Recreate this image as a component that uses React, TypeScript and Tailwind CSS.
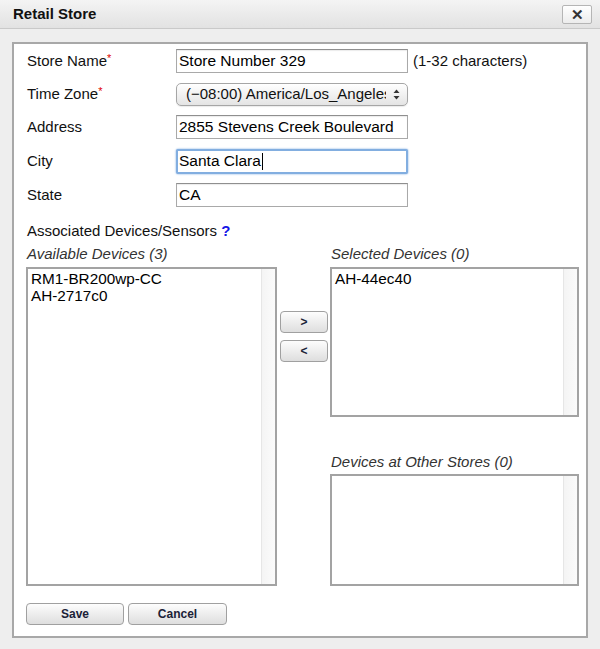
import React from "react";

const font = { fontFamily: '"Liberation Sans", Arial, Helvetica, sans-serif' };

function Label({ text, required }: { text: string; required?: boolean }) {
  return (
    <div className="w-[150px] shrink-0 pl-px pt-px text-[15px] text-[#111]">
      {text}
      {required && <span className="relative -top-[4px] text-[11px] text-[#e00000]">*</span>}
    </div>
  );
}

function TextInput({ value, focused }: { value: string; focused?: boolean }) {
  return (
    <div
      className={
        focused
          ? "flex h-[25px] w-[232px] items-center rounded-[2px] border-2 border-[#82aee0] bg-white pl-[1px] text-[15.5px] text-black shadow-[0_0_2px_#6b9fdc]"
          : "flex h-[24px] w-[232px] items-center border border-[#a9a9a9] border-t-[#8f8f8f] bg-white pl-[2px] text-[15.5px] text-black shadow-[inset_0_1px_1px_rgba(0,0,0,0.08)]"
      }
    >
      {value}
      {focused && <span className="ml-px inline-block h-[17px] w-px bg-black" />}
    </div>
  );
}

function ListBox({ items, height }: { items: string[]; height: string }) {
  return (
    <div className={`flex border-2 border-[#a3a3a3] bg-white ${height}`}>
      <div className="flex-1 pl-[3px] pt-px text-[15.3px] leading-[17px] text-black">
        {items.map((it) => (
          <div key={it}>{it}</div>
        ))}
      </div>
      <div className="w-[14px] border-l border-[#e6e6e6] bg-gradient-to-r from-[#f4f4f4] to-[#fbfbfb]" />
    </div>
  );
}

function SmallButton({ label, width }: { label: string; width: string }) {
  return (
    <button
      className={`flex h-[22px] ${width} items-center justify-center rounded-[4px] border border-[#a0a0a0] bg-gradient-to-b from-[#fdfdfd] to-[#dedede] text-[12px] font-bold text-[#1b2238] shadow-[0_1px_0_#fff]`}
    >
      {label}
    </button>
  );
}

export default function App() {
  return (
    <div className="flex h-[649px] w-[600px] flex-col bg-[#eeeeee]" style={font}>
      <div className="flex h-[29px] shrink-0 items-center justify-between border-b border-[#c9c9c9] bg-gradient-to-b from-[#f4f4f4] to-[#e2e2e2] pl-[13px] pr-[8px]">
        <span className="text-[15px] font-bold text-[#111]">Retail Store</span>
        <button className="flex h-[19px] w-[30px] items-center justify-center rounded-[2px] border border-[#b5b5b5] bg-gradient-to-b from-white to-[#ececec] text-[15px] font-bold leading-none text-[#333]">
          ✕
        </button>
      </div>

      <div className="flex flex-1 px-[12px] pb-[11px] pt-[13px]">
        <div className="flex flex-1 flex-col border-2 border-[#a8a8a8] bg-white pl-[12px] pr-[7px] pt-[5px]">
          <div className="flex h-[24px] items-center">
            <Label text="Store Name" required />
            <TextInput value="Store Number 329" />
            <span className="ml-[5px] text-[15px] text-[#111]">(1-32 characters)</span>
          </div>

          <div className="mt-[9px] flex h-[24px] items-center">
            <Label text="Time Zone" required />
            <div className="flex h-[23px] w-[232px] items-center rounded-[5px] border border-[#a6a6a6] bg-gradient-to-b from-white to-[#e4e4e4] pl-[9px] pr-[7px] text-[15px] text-[#111] shadow-[0_1px_1px_rgba(0,0,0,0.08)]">
              <span className="w-[200px] shrink-0 overflow-hidden whitespace-nowrap">(−08:00) America/Los_Angeles</span>
              <svg className="ml-auto shrink-0" width="7" height="11" viewBox="0 0 7 11">
                <path d="M3.5 0.5 L6.5 4 L0.5 4 Z" fill="#333" />
                <path d="M3.5 10.5 L6.5 7 L0.5 7 Z" fill="#333" />
              </svg>
            </div>
          </div>

          <div className="mt-[9px] flex h-[24px] items-center">
            <Label text="Address" />
            <TextInput value="2855 Stevens Creek Boulevard" />
          </div>

          <div className="mt-[10px] flex h-[24px] items-center">
            <Label text="City" />
            <TextInput value="Santa Clara" focused />
          </div>

          <div className="mt-[10px] flex h-[24px] items-center">
            <Label text="State" />
            <TextInput value="CA" />
          </div>

          <div className="mt-[14px] h-[20px] pl-px text-[15px] leading-[20px] text-[#111]">
            Associated Devices/Sensors{" "}
            <span className="font-bold text-[#1515e6]">?</span>
          </div>

          <div className="mt-[3px] flex">
            <div className="flex w-[251px] flex-col">
              <div className="h-[20px] pl-px text-[15px] italic leading-[20px] text-[#333]">Available Devices (3)</div>
              <div className="mt-[3px]">
                <ListBox items={["RM1-BR200wp-CC", "AH-2717c0"]} height="h-[319px]" />
              </div>
            </div>

            <div className="flex w-[53px] flex-col items-center pl-px">
              <div className="mt-[67px]">
                <SmallButton label=">" width="w-[48px]" />
              </div>
              <div className="mt-[7px]">
                <SmallButton label="<" width="w-[48px]" />
              </div>
            </div>

            <div className="flex w-[249px] flex-col">
              <div className="h-[20px] pl-px text-[15px] italic leading-[20px] text-[#333]">Selected Devices (0)</div>
              <div className="mt-[3px]">
                <ListBox items={["AH-44ec40"]} height="h-[150px]" />
              </div>
              <div className="mt-[35px] h-[20px] pl-px text-[15px] italic leading-[20px] text-[#333]">
                Devices at Other Stores (0)
              </div>
              <div className="mt-[2px]">
                <ListBox items={[]} height="h-[112px]" />
              </div>
            </div>
          </div>

          <div className="mt-[17px] flex gap-[4px]">
            <SmallButton label="Save" width="w-[98px]" />
            <SmallButton label="Cancel" width="w-[99px]" />
          </div>
        </div>
      </div>
    </div>
  );
}
